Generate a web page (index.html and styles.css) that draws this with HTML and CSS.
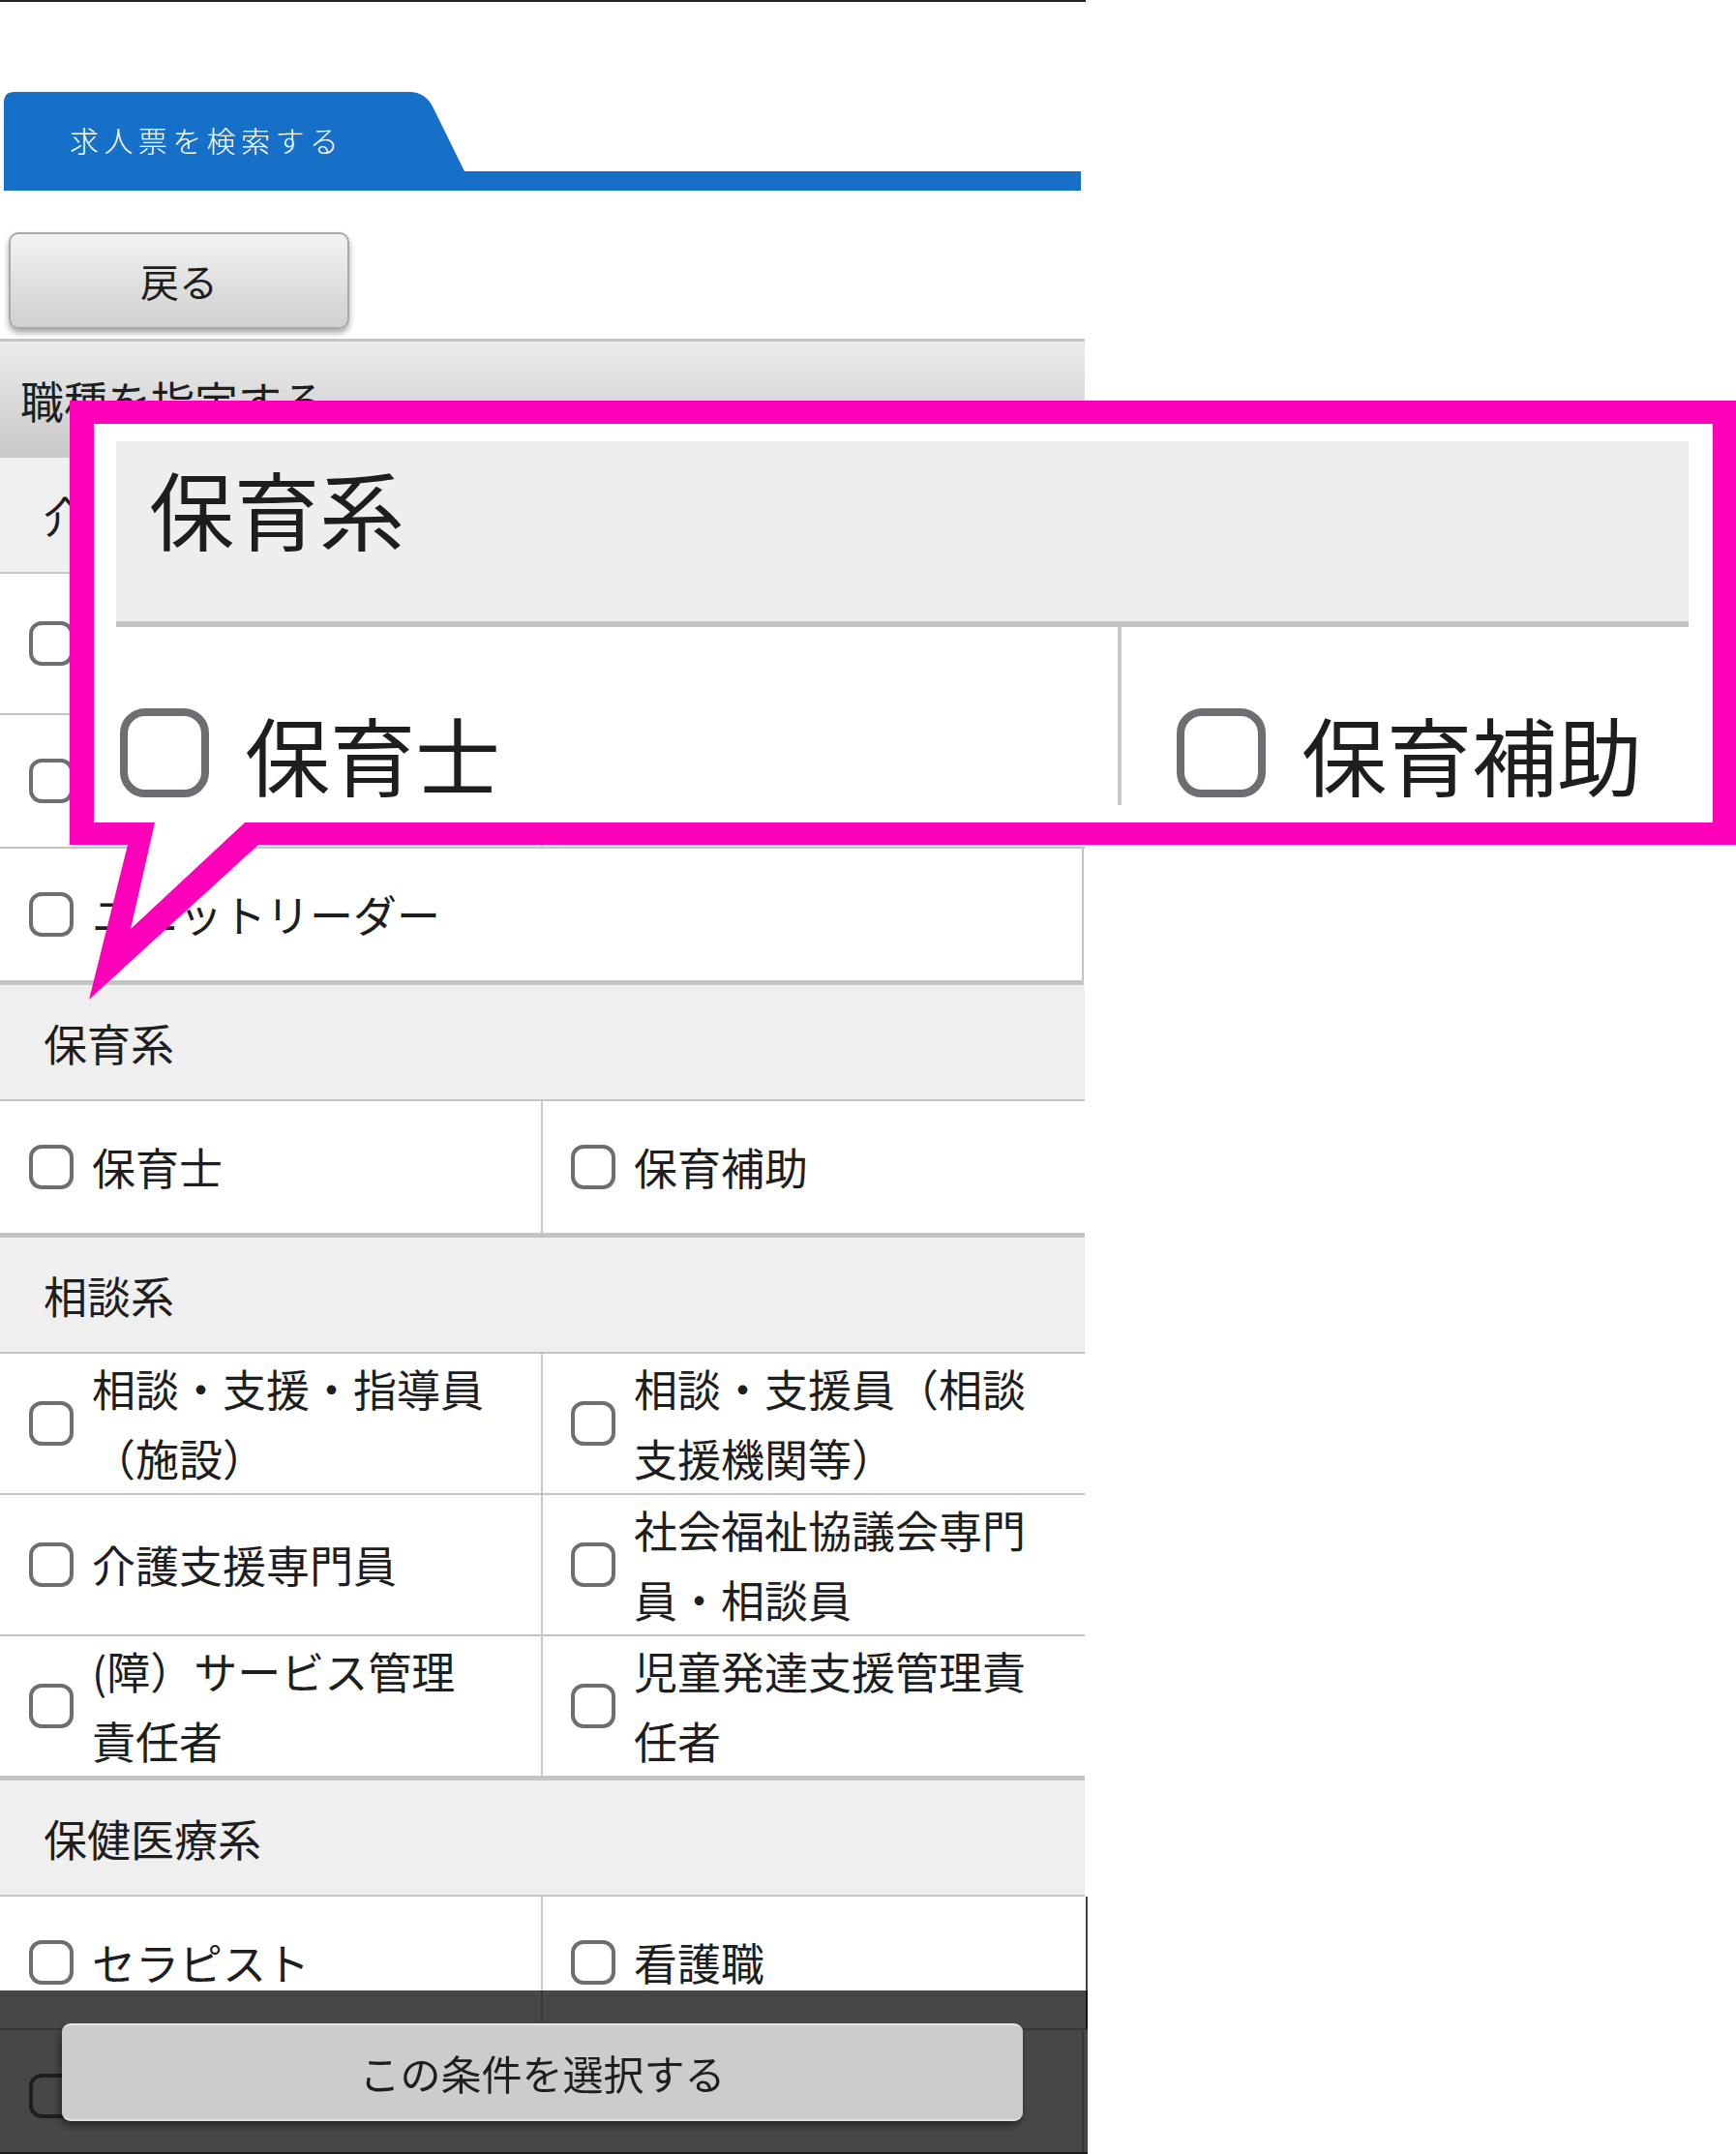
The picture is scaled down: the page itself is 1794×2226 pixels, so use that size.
FILE: index.html
```html
<!DOCTYPE html>
<html lang="ja">
<head>
<meta charset="utf-8">
<title>求人票を検索する</title>
<link rel="stylesheet" href="styles.css">
</head>
<body>
<div class="page">
  <div class="topline"></div>

  <div class="tabbar">
    <div class="tab">
      <svg class="tab-shape" width="476" height="82" viewBox="0 0 476 82"><path d="M0,82 L0,11 Q0,0 11,0 L419,0 Q436,0 444,17 L476,82 Z" fill="#1670c7"/></svg>
      <span class="tab-label">求人票を検索する</span>
    </div>
    <div class="tab-rule"></div>
  </div>

  <div class="back-wrap"><button class="back-btn">戻る</button></div>

  <div class="list">
    <div class="list-title">職種を指定する</div>

    <div class="group-head">介護系</div>
    <div class="row">
      <div class="cell"><span class="cb"></span><span class="txt">介護職・ヘルパー（施設・在宅）</span></div>
      <div class="cell"><span class="cb"></span><span class="txt">介護福祉士</span></div>
    </div>
    <div class="row">
      <div class="cell"><span class="cb"></span><span class="txt">ケアマネジャー</span></div>
      <div class="cell"><span class="cb"></span><span class="txt">生活相談員</span></div>
    </div>
    <div class="row single last">
      <div class="cell"><span class="cb"></span><span class="txt">ユニットリーダー</span></div>
    </div>

    <div class="group-head">保育系</div>
    <div class="row last">
      <div class="cell"><span class="cb"></span><span class="txt">保育士</span></div>
      <div class="cell"><span class="cb"></span><span class="txt">保育補助</span></div>
    </div>

    <div class="group-head">相談系</div>
    <div class="row">
      <div class="cell"><span class="cb"></span><span class="txt">相談・支援・指導員（施設）</span></div>
      <div class="cell"><span class="cb"></span><span class="txt">相談・支援員（相談支援機関等）</span></div>
    </div>
    <div class="row">
      <div class="cell"><span class="cb"></span><span class="txt">介護支援専門員</span></div>
      <div class="cell"><span class="cb"></span><span class="txt">社会福祉協議会専門員・相談員</span></div>
    </div>
    <div class="row last">
      <div class="cell"><span class="cb"></span><span class="txt">(障）サービス管理責任者</span></div>
      <div class="cell"><span class="cb"></span><span class="txt">児童発達支援管理責任者</span></div>
    </div>

    <div class="group-head">保健医療系</div>
    <div class="row edge">
      <div class="cell"><span class="cb"></span><span class="txt">セラピスト</span></div>
      <div class="cell"><span class="cb"></span><span class="txt">看護職</span></div>
    </div>
    <div class="row single">
      <div class="cell"><span class="cb"></span><span class="txt">医療事務</span></div>
    </div>
  </div>
</div>

<div class="callout">
  <svg class="callout-shape" width="1722" height="619" viewBox="0 0 1722 619">
    <path fill="#ff00ba" d="M0,0 H1722 V459 H195 L20,619 L60,459 H0 Z"/>
    <path fill="#ffffff" d="M25,24 H1698 V436 H181 L63,546 L88,436 H25 Z"/>
  </svg>
  <div class="zoom">
    <div class="z-head">保育系</div>
    <div class="z-row">
      <div class="z-cell z-left"><span class="z-cb"></span><span class="z-txt">保育士</span></div>
      <div class="z-cell z-right"><span class="z-cb"></span><span class="z-txt">保育補助</span></div>
    </div>
  </div>
</div>

<div class="bottom-bar">
  <button class="select-btn">この条件を選択する</button>
</div>
</body>
</html>
```

FILE: styles.css
```css
* { box-sizing: border-box; }
html, body { margin: 0; padding: 0; }
body {
  position: relative;
  width: 1794px;
  height: 2226px;
  overflow: hidden;
  background: #ffffff;
  font-family: "Noto Sans CJK JP", "Noto Sans", sans-serif;
  color: #1e1e1e;
}
.page { width: 1124px; }
.topline { width: 1122px; height: 2px; background: #222222; }

.tabbar { margin-top: 93px; padding-left: 4px; }
.tab { display: grid; width: 476px; height: 82px; }
.tab > * { grid-area: 1 / 1; }
.tab-shape { display: block; }
.tab-label {
  align-self: center;
  padding: 16px 0 0 68px;
  color: #ffffff;
  font-size: 30px;
  line-height: 1;
  letter-spacing: 5.4px;
  font-weight: 300;
}
.tab-rule { width: 1113px; height: 20px; background: #1670c7; }

.back-wrap { padding: 43px 0 0 9px; }
.back-btn {
  display: block;
  width: 352px;
  height: 100px;
  padding: 0;
  border: 2px solid #a9a9a9;
  border-radius: 10px;
  background: linear-gradient(#f2f2f2, #d0d0d0);
  box-shadow: 0 4px 6px rgba(0, 0, 0, 0.35);
  font-family: "Noto Sans CJK JP", sans-serif;
  font-size: 40px;
  color: #1e1e1e;
}

.list { margin-top: 10px; border-top: 3px solid #c4c4c4; width: 1121px; }
.list-title {
  height: 120px;
  background: linear-gradient(#ececec, #c8c8c8);
  display: flex;
  align-items: center;
  padding-left: 21px;
  font-size: 45px;
}
.group-head {
  height: 120px;
  background: #efefef;
  border-bottom: 2px solid #c4c4c4;
  display: flex;
  align-items: center;
  padding-left: 45px;
  font-size: 45px;
}
.row {
  display: grid;
  grid-template-columns: 559px 1fr;
  border-bottom: 2px solid #c4c4c4;
  background: #ffffff;
}
.row.last { border-bottom-width: 5px; }
.row.single { grid-template-columns: 1fr; width: 1120px; border-right: 2px solid #c4c4c4; }
.row.edge { width: 1124px; border-right: 2px solid #444444; }
.cell {
  display: flex;
  align-items: center;
  min-height: 136px;
  padding: 0 54px 0 30px;
}
.cell + .cell { border-left: 2px solid #c8c8c8; padding-left: 29px; }
.cb {
  flex: none;
  width: 46px;
  height: 46px;
  border: 4px solid #6d6d72;
  border-radius: 13px;
  margin-right: 19px;
}
.txt { font-size: 45px; line-height: 72px; }

.callout { position: absolute; left: 72px; top: 414px; width: 1722px; height: 619px; }
.callout-shape { position: absolute; left: 0; top: 0; display: block; }
.zoom {
  position: absolute;
  left: 25px;
  top: 24px;
  width: 1673px;
  height: 412px;
  overflow: hidden;
  padding: 18px 25px 0 23px;
}
.z-head {
  height: 192px;
  background: #eeeeee;
  border-bottom: 6px solid #c4c4c4;
  padding: 24px 0 0 34px;
  font-size: 88px;
  line-height: 88px;
}
.z-row { display: flex; height: 184px; }
.z-cell { display: flex; align-items: flex-start; padding-top: 84px; }
.z-left { width: 1039px; padding-left: 4px; border-right: 4px solid #c8c8c8; }
.z-right { flex: 1; padding-left: 57px; }
.z-cb {
  flex: none;
  width: 92px;
  height: 92px;
  border: 8px solid #6d6d72;
  border-radius: 26px;
  margin-right: 37px;
}
.z-txt { font-size: 88px; line-height: 92px; }

.bottom-bar {
  position: fixed;
  left: 0;
  bottom: 0;
  width: 1124px;
  height: 169px;
  background: rgba(0, 0, 0, 0.72);
  border-bottom: 2px solid #1a1a1a;
  padding: 34px 0 0 64px;
}
.select-btn {
  display: block;
  width: 993px;
  height: 101px;
  padding: 0;
  border: none;
  border-top: 2px solid #e8e8e8;
  border-bottom: 2px solid #e2e2e2;
  border-radius: 9px;
  background: #cccccc;
  box-shadow: -2px 5px 8px rgba(0, 0, 0, 0.45);
  font-family: "Noto Sans CJK JP", sans-serif;
  font-size: 42px;
  color: #1e1e1e;
}
```
